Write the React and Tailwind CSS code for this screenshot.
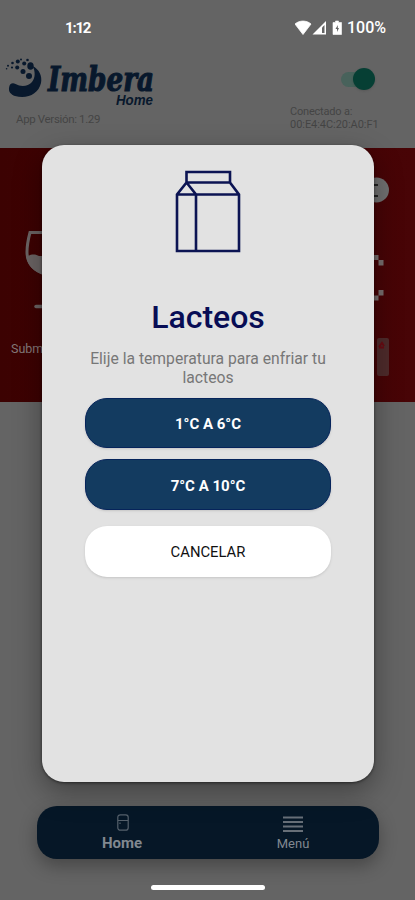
import React from 'react';

function StatusBar() {
  return (
    <div className="flex h-14 items-center justify-between pl-[65px] pr-[29px] text-white">
      <span className="text-[15px] font-bold tracking-[-1.2px]">1:12</span>
      <div className="flex items-center">
        <svg width="48" height="16" viewBox="0 0 48 16" fill="currentColor">
          <path d="M0 4C4.5 .1 11.5 .1 16 4L8 14.500Z" stroke="currentColor" strokeWidth=".8" strokeLinejoin="round" />
          <path d="M17.500 14.500L31 1V14.500Z" />
          <path d="M27 7.500L29.500 5V13H27Z" fill="#646464" />
          <path d="M40.500 1h3v1.500H46.500V14.500H38V2.500h2.500Z" strokeLinejoin="round" stroke="currentColor" strokeWidth=".6" />
          <path d="M42.800 5L40.500 9h1.500v3L44 8h-1.200Z" fill="#646464" />
        </svg>
        <span className="ml-1 text-[16px] font-medium">100%</span>
      </div>
    </div>
  );
}

function Logo() {
  return (
    <svg className="overflow-visible text-[#08182c]" width="160" height="56" viewBox="0 0 160 56" fill="currentColor">
      {/* Remolino */}
      <path d="M32.500 10C39 13 42.500 20 41 27C38.500 38 27 43.500 15 40C11 38.500 8.500 36 9 32C9.500 27.500 12.500 26.500 15.500 28C21 31 28 30.500 32 26C35.500 22 35.500 15 32.500 10Z" />
      <ellipse cx="30.500" cy="10" rx="3.200" ry="3.800" />
      <circle cx="29" cy="20" r="3" />
      <circle cx="23" cy="15.500" r="2.500" />
      <circle cx="24.200" cy="7.500" r="2" />
      <circle cx="17.800" cy="5.500" r="2" />
      <circle cx="17.200" cy="11.500" r="2" />
      <circle cx="12.500" cy="7" r="1.300" />
      <circle cx="12" cy="11.500" r="1.100" />
      <circle cx="8" cy="9.700" r="1" />
      <circle cx="6.600" cy="12.800" r=".8" />
      <circle cx="21" cy="3.500" r="1" />
      <circle cx="27.500" cy="4" r="1.300" />
      <text x="48" y="34.500" textLength="106" lengthAdjust="spacingAndGlyphs" stroke="currentColor" strokeWidth="1.200" className="font-['DejaVu_Serif','Liberation_Serif',serif] text-[33px] font-bold italic">Imbera</text>
      <text x="116" y="49" textLength="37" lengthAdjust="spacingAndGlyphs" className="font-['Liberation_Sans',sans-serif] text-[14px] font-bold italic">Home</text>
    </svg>
  );
}

function Header() {
  return (
    <header className="flex h-[92px] justify-between text-[#444]">
      <div>
        <Logo />
        <p className="ml-4 text-[11.500px] leading-[14px] tracking-[-0.35px]">App Versión: 1.29</p>
      </div>
      <div className="w-[125px]">
        <div className="ml-[51px] mt-3 flex h-[22px] w-[34px] items-center">
          <div className="h-[15px] w-5 rounded-l-full bg-[#48625b]" />
          <div className="-ml-2 h-[22px] w-[22px] shrink-0 rounded-full bg-[#063f34] shadow-sm" />
        </div>
        <p className="mt-[15px] text-[11px] leading-[13px]">
          <span className="tracking-[-0.2px]">Conectado a:</span>
          <br />
          <span className="tracking-[-0.05px]">00:E4:4C:20:A0:F1</span>
        </p>
      </div>
    </header>
  );
}

function FridgePanel() {
  return (
    <section className="h-[254px] bg-linear-to-r from-[#3c0202] to-[#480406]">
      <svg width="415" height="254" viewBox="0 0 415 254">
        <path d="M45 84.500H30C28 92 27 98 27 104C27 114 33 122 45 126" fill="none" stroke="#6b6464" strokeWidth="3" />
        <path d="M26.500 109C31 105.500 36 106 39 108H45V127.500C34 124 27 117 26.500 109Z" fill="#6b6464" />
        <path d="M36 158.500H45" stroke="#6b6464" strokeWidth="3.500" strokeLinecap="round" />
        <text x="11" y="204.500" fill="#837878" className="text-[12.500px]">Subm</text>
        <circle cx="376.500" cy="42" r="12.500" fill="#707070" />
        <path d="M372 37h6M372 48h6" stroke="#222" strokeWidth="2" />
        <path d="M374 107h4.500v5h-4.500ZM378.500 112h5v5.500h-5ZM378.500 142h5v5.500h-5ZM374 147.500h4.500v5h-4.500Z" fill="#776e6e" />
        <rect x="377" y="190" width="12" height="38" rx="2" fill="#4e2b2b" />
        <path d="M379 199l3-4l2 3M379 199.500h5" stroke="#680b12" strokeWidth="2" fill="none" />
      </svg>
    </section>
  );
}

function MilkIcon() {
  return (
    <svg width="68" height="84" viewBox="0 0 68 84" fill="none" stroke="#0c1453" strokeWidth="2.600">
      <path d="M12.500 2H56V12.500L65 24.500V81H3V24.500L12.500 12.500ZM12.500 12.500H56M3 24.500H65M12.500 12.500L22 24.500V81" />
    </svg>
  );
}

function TemperatureModal() {
  return (
    <div className="absolute left-[42px] top-[145px] flex h-[637px] w-[332px] flex-col items-center rounded-[22px] bg-[#e2e2e2] shadow-[0_10px_28px_rgba(0,0,0,0.35),0_1px_3px_rgba(0,0,0,0.5)]">
      <div className="mt-[25px]">
        <MilkIcon />
      </div>
      <h1 className="mt-[44px] text-[32px] font-medium leading-[38px] text-[#080d55]">Lacteos</h1>
      <p className="mt-[14px] w-[260px] text-center text-[15.700px] leading-[18.500px] text-[#777]">
        Elije la temperatura para enfriar tu lacteos
      </p>
      <div className="mt-[11px] flex w-[246px] flex-col text-[14.500px]">
        <button className="h-[50px] rounded-[22px] border border-[#06245b] bg-[#133b60] pt-[3px] text-[15px] font-bold text-white shadow">
          1°C A 6°C
        </button>
        <button className="mt-[11px] h-[51px] rounded-[22px] border border-[#06245b] bg-[#133b60] pt-[3px] text-[15px] font-bold text-white shadow">
          7°C A 10°C
        </button>
        <button className="mt-4 h-[51px] rounded-[22px] bg-white pt-px text-[14.800px] text-[#111] shadow">CANCELAR</button>
      </div>
    </div>
  );
}

function BottomNav() {
  return (
    <nav className="mx-auto flex h-[53px] w-[342px] rounded-[20px] bg-[#061727] text-[#818890] shadow-[0_7px_18px_rgba(0,0,0,0.3)]">
      <div className="flex flex-1 flex-col items-center pt-2">
        <svg className="ml-0.5" width="12" height="17" viewBox="0 0 12 17" fill="none" stroke="#56616c" strokeWidth="1.200">
          <rect x=".8" y=".8" width="10.400" height="15.400" rx="2.500" />
          <path d="M1 6.500H11M3 8.500V10" />
        </svg>
        <span className="mt-1 text-[15px] font-bold leading-[17px]">Home</span>
      </div>
      <div className="flex flex-1 flex-col items-center pt-[10px]">
        <svg width="20" height="17" viewBox="0 0 20 17" stroke="#676f78" strokeWidth="1.800">
          <path d="M0 1.500H20M0 6H20M0 10.500H20M0 15H20" />
        </svg>
        <span className="mt-[3px] text-[13px] leading-4">Menú</span>
      </div>
    </nav>
  );
}

export default function App() {
  return (
    <div className="relative flex h-[900px] w-[415px] flex-col overflow-hidden bg-[#646464] font-[Roboto,sans-serif]">
      <StatusBar />
      <Header />
      <FridgePanel />
      <div className="mt-auto">
        <BottomNav />
        <div className="mx-auto mb-[10px] mt-[26px] h-[5px] w-[114px] rounded-full bg-white" />
      </div>
      <TemperatureModal />
    </div>
  );
}
